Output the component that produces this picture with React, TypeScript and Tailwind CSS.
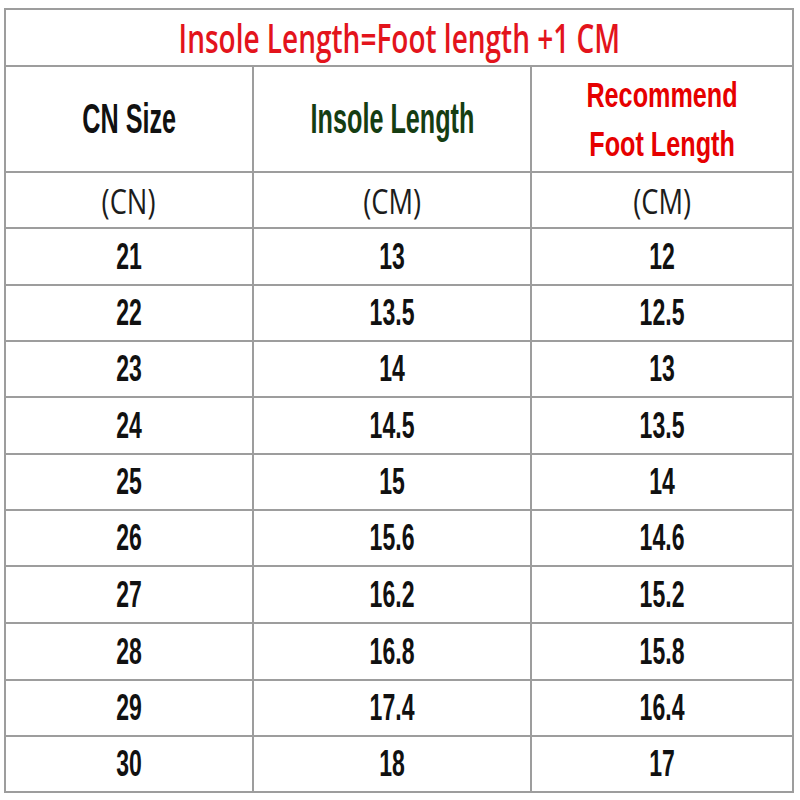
import React from "react";

const rows: [string, string, string, string][] = [
  ["21", "13", "12", "h-[57px]"],
  ["22", "13.5", "12.5", "h-[56px]"],
  ["23", "14", "13", "h-[56px]"],
  ["24", "14.5", "13.5", "h-[57px]"],
  ["25", "15", "14", "h-[56px]"],
  ["26", "15.6", "14.6", "h-[56px]"],
  ["27", "16.2", "15.2", "h-[57px]"],
  ["28", "16.8", "15.8", "h-[57px]"],
  ["29", "17.4", "16.4", "h-[56px]"],
  ["30", "18", "17", "h-[54px]"],
];

const arial = { fontFamily: '"Liberation Sans", Arial, sans-serif' };
const open = { fontFamily: '"Open Sans", "Liberation Sans", sans-serif' };

function Num({ children }: { children: React.ReactNode }) {
  return (
    <span
      className="inline-block scale-x-[0.64] text-[36px] font-bold leading-none text-[#111]"
      style={arial}
    >
      {children}
    </span>
  );
}

function Unit({ children }: { children: React.ReactNode }) {
  return (
    <span
      className="inline-block scale-x-[0.78] text-[35px] font-medium leading-none text-[#1c1c1c]"
      style={open}
    >
      {children}
    </span>
  );
}

export default function App() {
  return (
    <div className="w-[800px] h-[800px] bg-white pl-[4px] pt-[8px]">
      <div className="w-[790px] border-2 border-[#9d9d9d] flex flex-col">
        <div className="h-[57px] border-b-2 border-[#9d9d9d] flex items-center justify-center">
          <span
            className="inline-block scale-x-[0.7] text-[40px] font-semibold leading-none text-[#e3141c] whitespace-nowrap"
            style={open}
          >
            Insole Length=Foot length +1 CM
          </span>
        </div>
        <div className="h-[106px] border-b-2 border-[#9d9d9d] grid grid-cols-[248px_278px_1fr]">
          <div className="border-r-2 border-[#9d9d9d] flex items-center justify-center">
            <span
              className="inline-block scale-x-[0.6] text-[42px] font-bold leading-none text-[#111] whitespace-nowrap"
              style={arial}
            >
              CN Size
            </span>
          </div>
          <div className="border-r-2 border-[#9d9d9d] flex items-center justify-center">
            <span
              className="inline-block scale-x-[0.6] text-[42px] font-bold leading-none text-[#153d12] whitespace-nowrap"
              style={arial}
            >
              Insole Length
            </span>
          </div>
          <div className="flex flex-col items-center justify-center">
            <span
              className="inline-block scale-x-[0.72] text-[35px] font-bold leading-[49px] text-[#e60000] whitespace-nowrap text-center"
              style={arial}
            >
              Recommend
              <br />
              Foot Length
            </span>
          </div>
        </div>
        <div className="h-[56px] border-b-2 border-[#9d9d9d] grid grid-cols-[248px_278px_1fr]">
          <div className="border-r-2 border-[#9d9d9d] flex items-center justify-center">
            <Unit>(CN)</Unit>
          </div>
          <div className="border-r-2 border-[#9d9d9d] flex items-center justify-center">
            <Unit>(CM)</Unit>
          </div>
          <div className="flex items-center justify-center">
            <Unit>(CM)</Unit>
          </div>
        </div>
        {rows.map(([a, b, c, h], i) => (
          <div
            key={a}
            className={
              "grid grid-cols-[248px_278px_1fr] " +
              h +
              (i < rows.length - 1 ? " border-b-2 border-[#9d9d9d]" : "")
            }
          >
            <div className="border-r-2 border-[#9d9d9d] flex items-center justify-center">
              <Num>{a}</Num>
            </div>
            <div className="border-r-2 border-[#9d9d9d] flex items-center justify-center">
              <Num>{b}</Num>
            </div>
            <div className="flex items-center justify-center">
              <Num>{c}</Num>
            </div>
          </div>
        ))}
      </div>
    </div>
  );
}
